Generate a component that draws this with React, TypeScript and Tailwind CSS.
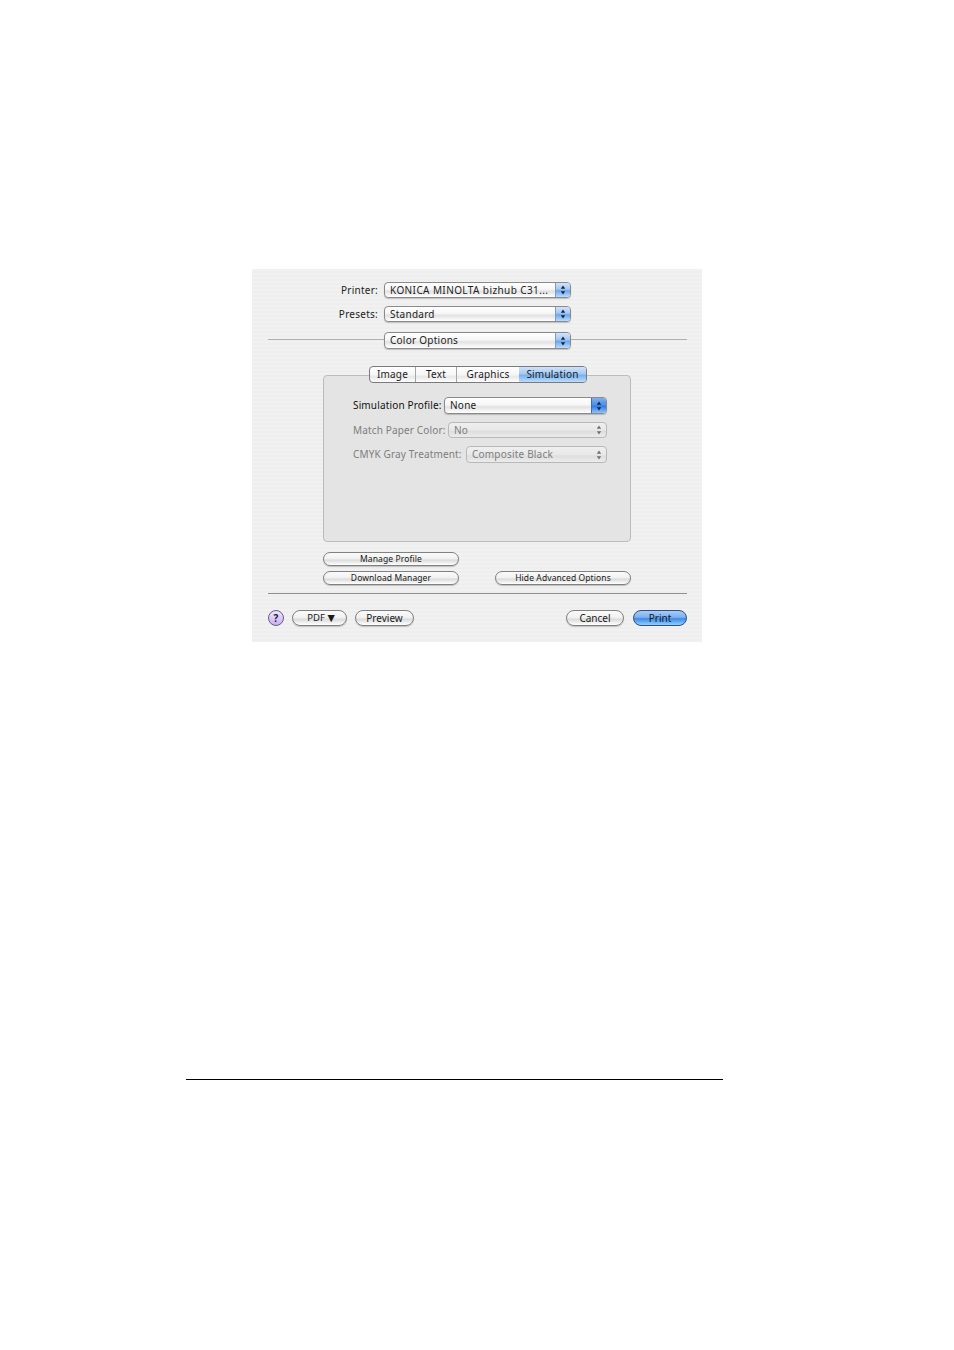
const font = "font-['Noto_Sans','DejaVu_Sans',sans-serif]";
const labelText = "text-[10px] tracking-[0.25px] whitespace-nowrap pt-px";
const boxLabel = "text-[10px] tracking-[0.15px] whitespace-nowrap";

function Stepper({ color }: { color: string }) {
  return (
    <svg width="6" height="10" viewBox="0 0 6 10">
      <path d="M3 0.5 L5.2 3.8 H0.8 Z" fill={color} />
      <path d="M3 9.5 L5.2 6.2 H0.8 Z" fill={color} />
    </svg>
  );
}

function BlueSelect({ text, className, strong, textClass }: { text: string; className: string; strong?: boolean; textClass?: string }) {
  return (
    <div className={"flex shrink-0 rounded-[4px] border border-[#8a8a8a] shadow-[0_1px_1px_rgba(0,0,0,0.2)] overflow-hidden bg-[linear-gradient(#ffffff_0%,#f6f6f6_45%,#e2e2e2_60%,#ffffff_100%)] " + className}>
      <span className={"flex-1 pl-[5px] text-[10px] leading-[15px] text-[#1c1c1c] whitespace-nowrap overflow-hidden " + (textClass ?? "tracking-[0.25px]")}>{text}</span>
      <span className={strong
        ? "w-[15px] flex items-center justify-center border-l border-[#3f6db0] bg-[linear-gradient(#7fb0ee_0%,#4f8fe6_45%,#2f7ce8_55%,#8cc4fa_100%)]"
        : "w-[15px] flex items-center justify-center border-l border-[#7d9cc8] bg-[linear-gradient(#d3e4fa_0%,#a3c6f2_45%,#6aa6ee_55%,#bcdcfc_100%)]"}>
        <Stepper color="#10243f" />
      </span>
    </div>
  );
}

function GraySelect({ text, className }: { text: string; className: string }) {
  return (
    <div className={"flex shrink-0 rounded-[4px] border border-[#b8b8b8] bg-[linear-gradient(#efefef_0%,#e8e8e8_50%,#dedede_60%,#ececec_100%)] " + className}>
      <span className="flex-1 pl-[5px] text-[10px] leading-[15px] text-[#7d7d7d] tracking-[0.2px] whitespace-nowrap">{text}</span>
      <span className="w-[15px] flex items-center justify-center">
        <Stepper color="#6f6f6f" />
      </span>
    </div>
  );
}

function PillButton({ text, className }: { text: string; className: string }) {
  return (
    <button className={"flex items-center justify-center rounded-full border border-[#808080] shadow-[0_1px_1px_rgba(0,0,0,0.2)] bg-[linear-gradient(#fafafa_0%,#f2f2f2_45%,#dcdcdc_60%,#ffffff_100%)] text-[#1a1a1a] " + className}>
      {text}
    </button>
  );
}

function Tab({ text, className }: { text: string; className: string }) {
  return (
    <div className={"flex items-center justify-center text-[10px] tracking-[0.2px] text-[#1c1c1c] " + className}>{text}</div>
  );
}

export default function App() {
  return (
    <div className={"w-[954px] h-[1350px] bg-white pt-[269px] " + font}>
      <div className="ml-[252px] w-[450px] h-[373px] pl-[16px] pr-[15px] pt-[13px] bg-[repeating-linear-gradient(#f1f1f1_0px,#f1f1f1_2px,#eeeeee_2px,#eeeeee_4px)]">
        <div className="flex items-center h-[16px]">
          <span className={"w-[110px] text-right text-[#222] " + labelText}>Printer:</span>
          <BlueSelect text="KONICA MINOLTA bizhub C31..." textClass="tracking-[0.4px]" className="ml-[6px] w-[187px] h-[16px]" />
        </div>
        <div className="flex items-center h-[16px] mt-[8px]">
          <span className={"w-[110px] text-right text-[#222] " + labelText}>Presets:</span>
          <BlueSelect text="Standard" className="ml-[6px] w-[187px] h-[16px]" />
        </div>
        <div className="flex items-start h-[17px] mt-[10px]">
          <div className="mt-[7px] w-[116px] h-px bg-[#b0b0b0]" />
          <BlueSelect text="Color Options" className="w-[187px] h-[17px]" />
          <div className="mt-[7px] flex-1 h-px bg-[#b0b0b0]" />
        </div>

        <div className="relative z-10 mt-[17px] ml-[101px] w-[218px] h-[17px] flex rounded-[4px] border border-[#7a7a7a] overflow-hidden bg-[linear-gradient(#ffffff_0%,#f6f6f6_50%,#e8e8e8_65%,#ffffff_100%)]">
          <Tab text="Image" className="w-[46px] border-r border-[#a5a5a5]" />
          <Tab text="Text" className="w-[41px] border-r border-[#a5a5a5]" />
          <Tab text="Graphics" className="w-[62px]" />
          <Tab text="Simulation" className="flex-1 bg-[linear-gradient(#cfe2f9_0%,#a6caf3_45%,#78b0ef_55%,#bddcfb_100%)]" />
        </div>

        <div className="-mt-[8px] ml-[55px] w-[308px] h-[167px] rounded-[4px] border border-[#bcbcbc] bg-[#e4e4e4] pt-[21px] pl-[29px] pr-[23px] flex flex-col">
          <div className="flex items-center justify-between h-[17px]">
            <span className={"text-[#111] " + boxLabel}>Simulation Profile:</span>
            <BlueSelect text="None" strong className="w-[163px] h-[17px]" />
          </div>
          <div className="flex items-center justify-between h-[16px] mt-[8px]">
            <span className={"text-[#7d7d7d] " + boxLabel}>Match Paper Color:</span>
            <GraySelect text="No" className="w-[159px] h-[16px]" />
          </div>
          <div className="flex items-center justify-between h-[17px] mt-[8px]">
            <span className={"text-[#7d7d7d] " + boxLabel}>CMYK Gray Treatment:</span>
            <GraySelect text="Composite Black" className="w-[141px] h-[17px]" />
          </div>
        </div>

        <div className="ml-[55px] mt-[10px]">
          <PillButton text="Manage Profile" className="w-[136px] h-[14px] text-[8.5px] tracking-[0.1px]" />
        </div>
        <div className="ml-[55px] mt-[5px] w-[308px] flex justify-between">
          <PillButton text="Download Manager" className="w-[136px] h-[14px] text-[8.5px] tracking-[0.1px]" />
          <PillButton text="Hide Advanced Options" className="w-[136px] h-[14px] text-[8.5px] tracking-[0.1px]" />
        </div>

        <div className="mt-[8px] h-px bg-[#8f8f8f]" />

        <div className="mt-[16px] flex items-center h-[16px]">
          <div className="w-[16px] h-[16px] rounded-full border border-[#6a5a8c] bg-[linear-gradient(#f0e6ff,#c9b0f0)] flex items-center justify-center text-[10px] font-bold text-[#1c1c2c]">?</div>
          <PillButton text="PDF ▼" className="ml-[8px] w-[55px] h-[16px] pl-[3px] text-[9.5px]" />
          <PillButton text="Preview" className="ml-[8px] w-[59px] h-[16px] text-[10px]" />
          <PillButton text="Cancel" className="ml-auto w-[58px] h-[16px] text-[10px]" />
          <button className="ml-[9px] w-[54px] h-[16px] rounded-full border border-[#2c4f86] flex items-center justify-center text-[10px] text-[#10182a] bg-[linear-gradient(#a7cbf6_0%,#7db1ef_45%,#3f8ae8_55%,#8fd0fb_100%)]">Print</button>
        </div>
      </div>
      <div className="mt-[437px] ml-[186px] w-[537px] h-px bg-black" />
    </div>
  );
}
